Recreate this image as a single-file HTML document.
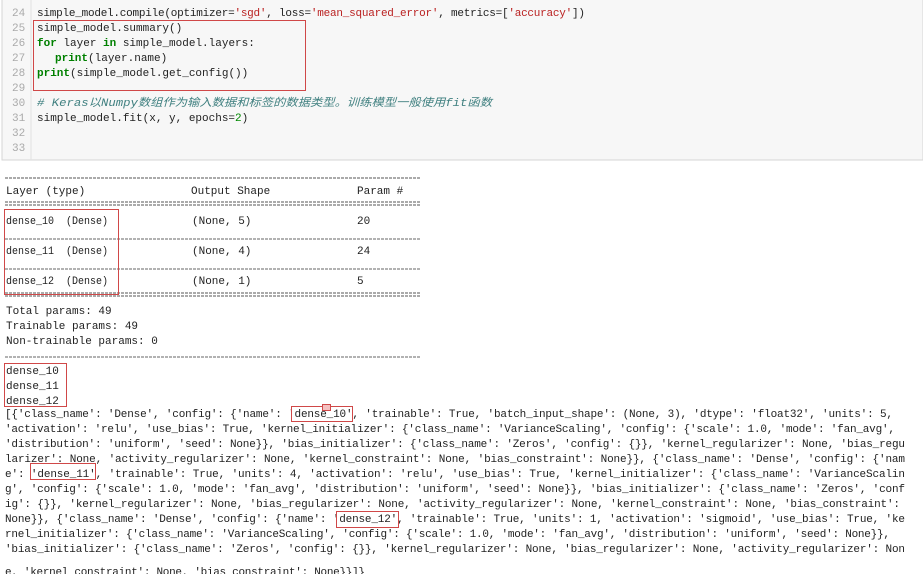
<!DOCTYPE html>
<html><head><meta charset="utf-8"><style>
html,body{margin:0;padding:0;background:#fff;width:923px;height:574px;overflow:hidden}
svg text{font-family:"Liberation Mono","Noto Sans CJK SC",monospace;font-size:11px;fill:#222;white-space:pre}
.ln{fill:#aaa;font-size:11px}
.k{fill:#008000;font-weight:bold}
.s{fill:#ba2121}
.c{fill:#408080;font-style:italic}
.n{fill:#080}
</style></head><body>
<svg width="923" height="574" xmlns="http://www.w3.org/2000/svg" xml:space="preserve">
<rect x="2" y="-2" width="921" height="162" fill="#f7f7f7" stroke="#d6d6d6"/>
<line x1="31" y1="0" x2="31" y2="160" stroke="#e2e2e2"/>
<text class="ln" x="12" y="16">24</text><text class="ln" x="12" y="31">25</text><text class="ln" x="12" y="46">26</text><text class="ln" x="12" y="61">27</text><text class="ln" x="12" y="76">28</text><text class="ln" x="12" y="91">29</text><text class="ln" x="12" y="106">30</text><text class="ln" x="12" y="121">31</text><text class="ln" x="12" y="136">32</text><text class="ln" x="12" y="151">33</text>
<text x="37" y="16" textLength="548" lengthAdjust="spacing">simple_model.compile(optimizer=<tspan class="s">'sgd'</tspan>, loss=<tspan class="s">'mean_squared_error'</tspan>, metrics=[<tspan class="s">'accuracy'</tspan>])</text>
<text x="37" y="31">simple_model.summary()</text>
<text x="37" y="46"><tspan class="k">for</tspan> layer <tspan class="k">in</tspan> simple_model.layers:</text>
<text x="55" y="61"><tspan class="k">print</tspan>(layer.name)</text>
<text x="37" y="76"><tspan class="k">print</tspan>(simple_model.get_config())</text>
<text x="37" y="106" class="c" textLength="455" lengthAdjust="spacingAndGlyphs"># Keras以Numpy数组作为输入数据和标签的数据类型。训练模型一般使用fit函数</text>
<text x="37" y="121">simple_model.fit(x, y, epochs=<tspan class="n">2</tspan>)</text>
<rect x="33.5" y="20.5" width="272" height="70" fill="none" stroke="#d04848"/>

<line x1="5" y1="178" x2="420" y2="178" stroke="#555" stroke-dasharray="3,1"/>
<text x="6" y="194">Layer (type)</text><text x="191" y="194">Output Shape</text><text x="357" y="194">Param #</text>
<line x1="5" y1="202" x2="420" y2="202" stroke="#555" stroke-dasharray="3,1"/>
<line x1="5" y1="205" x2="420" y2="205" stroke="#555" stroke-dasharray="3,1"/>
<text x="6" y="224" textLength="102" lengthAdjust="spacingAndGlyphs">dense_10  (Dense)</text><text x="192" y="224">(None, 5)</text><text x="357" y="224">20</text>
<line x1="5" y1="239" x2="420" y2="239" stroke="#666" stroke-dasharray="3,1"/>
<text x="6" y="254" textLength="102" lengthAdjust="spacingAndGlyphs">dense_11  (Dense)</text><text x="192" y="254">(None, 4)</text><text x="357" y="254">24</text>
<line x1="5" y1="269" x2="420" y2="269" stroke="#666" stroke-dasharray="3,1"/>
<text x="6" y="284" textLength="102" lengthAdjust="spacingAndGlyphs">dense_12  (Dense)</text><text x="192" y="284">(None, 1)</text><text x="357" y="284">5</text>
<line x1="5" y1="293" x2="420" y2="293" stroke="#555" stroke-dasharray="3,1"/>
<line x1="5" y1="296" x2="420" y2="296" stroke="#555" stroke-dasharray="3,1"/>
<rect x="4.5" y="209.5" width="114" height="85" fill="none" stroke="#d04848"/>
<text x="6" y="314">Total params: 49</text>
<text x="6" y="329">Trainable params: 49</text>
<text x="6" y="344">Non-trainable params: 0</text>
<line x1="5" y1="357" x2="420" y2="357" stroke="#666" stroke-dasharray="3,1"/>
<text x="6" y="374">dense_10</text><text x="6" y="389">dense_11</text><text x="6" y="404">dense_12</text>
<rect x="4.5" y="363.5" width="62" height="43" fill="none" stroke="#d04848"/>

<text x="5" y="417" textLength="888" lengthAdjust="spacing">[{'class_name': 'Dense', 'config': {'name': 'dense_10', 'trainable': True, 'batch_input_shape': (None, 3), 'dtype': 'float32', 'units': 5,</text>
<text x="5" y="432" textLength="890" lengthAdjust="spacing">'activation': 'relu', 'use_bias': True, 'kernel_initializer': {'class_name': 'VarianceScaling', 'config': {'scale': 1.0, 'mode': 'fan_avg',</text>
<text x="5" y="447" textLength="900" lengthAdjust="spacing">'distribution': 'uniform', 'seed': None}}, 'bias_initializer': {'class_name': 'Zeros', 'config': {}}, 'kernel_regularizer': None, 'bias_regu</text>
<text x="5" y="462" textLength="900" lengthAdjust="spacing">larizer': None, 'activity_regularizer': None, 'kernel_constraint': None, 'bias_constraint': None}}, {'class_name': 'Dense', 'config': {'nam</text>
<text x="5" y="477" textLength="900" lengthAdjust="spacing">e': 'dense_11', 'trainable': True, 'units': 4, 'activation': 'relu', 'use_bias': True, 'kernel_initializer': {'class_name': 'VarianceScalin</text>
<text x="5" y="492" textLength="900" lengthAdjust="spacing">g', 'config': {'scale': 1.0, 'mode': 'fan_avg', 'distribution': 'uniform', 'seed': None}}, 'bias_initializer': {'class_name': 'Zeros', 'conf</text>
<text x="5" y="507" textLength="895" lengthAdjust="spacing">ig': {}}, 'kernel_regularizer': None, 'bias_regularizer': None, 'activity_regularizer': None, 'kernel_constraint': None, 'bias_constraint':</text>
<text x="5" y="522" textLength="900" lengthAdjust="spacing">None}}, {'class_name': 'Dense', 'config': {'name': 'dense_12', 'trainable': True, 'units': 1, 'activation': 'sigmoid', 'use_bias': True, 'ke</text>
<text x="5" y="537" textLength="885" lengthAdjust="spacing">rnel_initializer': {'class_name': 'VarianceScaling', 'config': {'scale': 1.0, 'mode': 'fan_avg', 'distribution': 'uniform', 'seed': None}},</text>
<text x="5" y="552" textLength="900" lengthAdjust="spacing">'bias_initializer': {'class_name': 'Zeros', 'config': {}}, 'kernel_regularizer': None, 'bias_regularizer': None, 'activity_regularizer': Non</text>
<text x="5" y="575" textLength="360" lengthAdjust="spacing">e, 'kernel_constraint': None, 'bias_constraint': None}}]}</text>
<rect x="291.5" y="406.5" width="61" height="15" fill="none" stroke="#d04848"/>
<rect x="322.5" y="404.5" width="8" height="6" fill="#f4c0c0" stroke="#d04848"/>
<rect x="30.5" y="463.5" width="65" height="16" fill="none" stroke="#d04848"/>
<rect x="336.5" y="511.5" width="62" height="16" fill="none" stroke="#d04848"/>
</svg>
</body></html>
